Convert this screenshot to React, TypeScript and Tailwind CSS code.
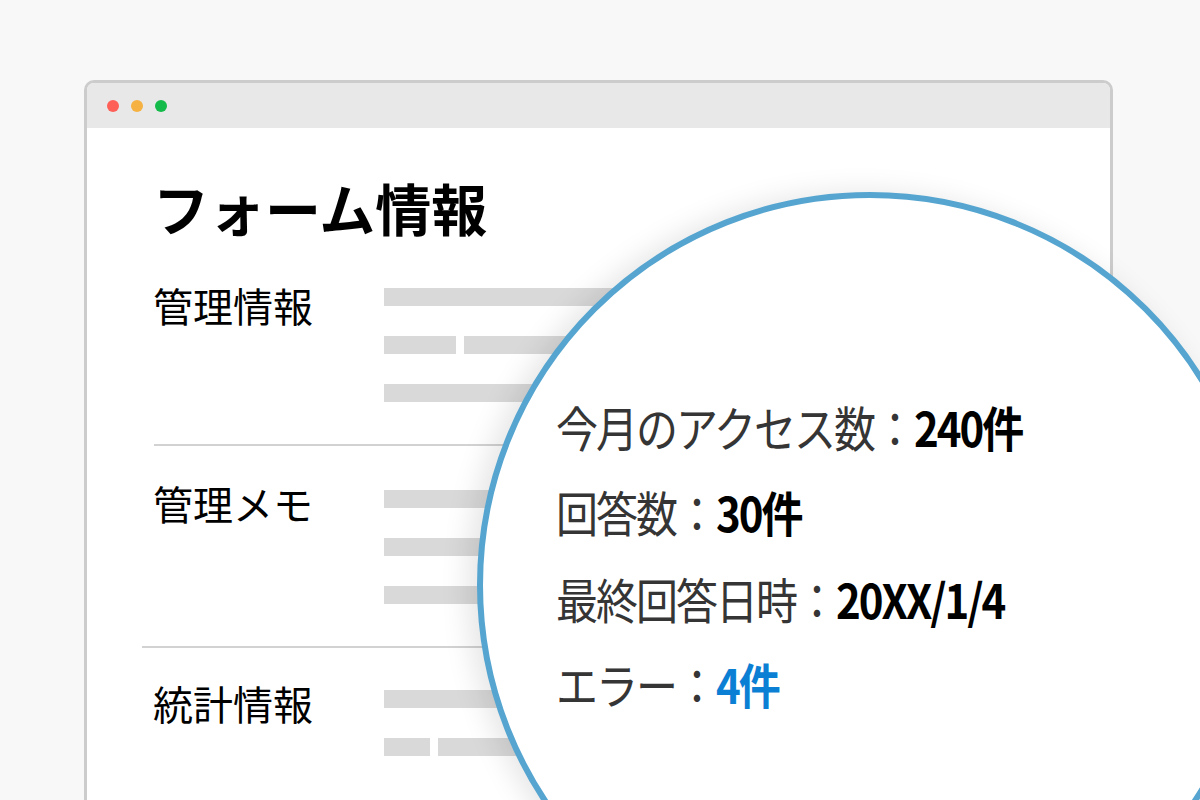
const jp = { fontFamily: '"Noto Sans CJK JP", "Noto Sans", sans-serif' };

function Bar() {
  return <div className="h-[18px] w-full bg-[#d9d9d9]" />;
}

function SplitBar({ first }: { first: string }) {
  return (
    <div className="flex gap-[8px]">
      <div className={`h-[18px] bg-[#d9d9d9] ${first}`} />
      <div className="h-[18px] flex-1 bg-[#d9d9d9]" />
    </div>
  );
}

export default function App() {
  return (
    <div className="relative h-[800px] w-[1200px] overflow-hidden bg-[#f8f8f8]" style={jp}>
      {/* browser window */}
      <div className="absolute left-[84px] top-[80px] h-[760px] w-[1029px] rounded-[10px] border-[3px] border-[#cccccc] bg-white">
        <div className="flex h-[45px] items-center gap-[12px] rounded-t-[7px] bg-[#e8e8e8] pl-[20px]">
          <span className="h-[12px] w-[12px] rounded-full bg-[#fe5f57]" />
          <span className="h-[12px] w-[12px] rounded-full bg-[#f5b142]" />
          <span className="h-[12px] w-[12px] rounded-full bg-[#14bb4a]" />
        </div>

        <div className="pl-[66px] pr-[60px] pt-[49px]">
          <h1 className="text-[56px] font-bold leading-[60px] text-black">フォーム情報</h1>
        </div>

        {/* 管理情報 */}
        <div className="mt-[46px] flex pl-[66px] pr-[60px]">
          <div className="w-[231px] text-[40px] leading-[44px] text-black">管理情報</div>
          <div className="flex flex-1 flex-col gap-[30px] pt-[5px]">
            <Bar />
            <SplitBar first="w-[72px]" />
            <Bar />
          </div>
        </div>
        <div className="ml-[67px] mr-[60px] mt-[42px] h-[2px] bg-[#d2d2d2]" />

        {/* 管理メモ */}
        <div className="mt-[35px] flex pl-[66px] pr-[60px]">
          <div className="w-[231px] text-[40px] leading-[44px] text-black">管理メモ</div>
          <div className="flex flex-1 flex-col gap-[30px] pt-[9px]">
            <Bar />
            <Bar />
            <Bar />
          </div>
        </div>
        <div className="ml-[55px] mr-[60px] mt-[42px] h-[2px] bg-[#d2d2d2]" />

        {/* 統計情報 */}
        <div className="mt-[33px] flex pl-[66px] pr-[60px]">
          <div className="w-[231px] text-[40px] leading-[44px] text-black">統計情報</div>
          <div className="flex flex-1 flex-col gap-[30px] pt-[9px]">
            <Bar />
            <SplitBar first="w-[46px]" />
          </div>
        </div>
      </div>

      {/* magnifier */}
      <div className="absolute left-[477px] top-[192px] h-[786px] w-[786px] rounded-full border-[6px] border-[#55a5d0] bg-white shadow-[-10px_0_28px_rgba(0,0,0,0.10)]">
        <div className="pl-[73px] pt-[185px]">
          <div className="origin-top-left scale-y-[1.14] text-[42px] leading-[75.4px] tracking-[-2px] text-[#353535]">
            <div>
              今月のアクセス数：<span className="font-bold text-black">240件</span>
            </div>
            <div>
              回答数：<span className="font-bold text-black">30件</span>
            </div>
            <div>
              最終回答日時：<span className="font-bold text-black">20XX/1/4</span>
            </div>
            <div>
              エラー：<span className="font-bold text-[#0b7fd4]">4件</span>
            </div>
          </div>
        </div>
      </div>
    </div>
  );
}
